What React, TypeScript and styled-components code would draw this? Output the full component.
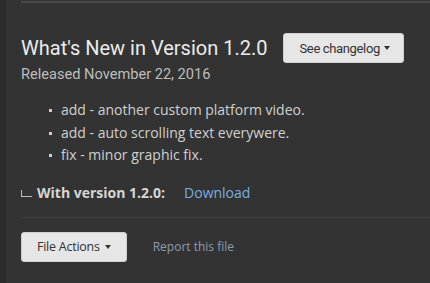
import React from "react";
import styled, { createGlobalStyle } from "styled-components";

const Global = createGlobalStyle`
  html, body { margin: 0; padding: 0; background: #333333; }
  body { width: 430px; height: 283px; overflow: hidden; }
`;

const Page = styled.div`
  display: flex;
  height: 283px;
  background: #333333;
`;

const SideStrip = styled.div`
  width: 6px;
  background: #2b2b2b;
  flex-shrink: 0;
`;

const Main = styled.div`
  flex: 1;
  padding-left: 15px;
  display: flex;
  flex-direction: column;
`;

const TopRule = styled.div`
  height: 2px;
  margin-top: 1px;
  background: #474747;
`;

const Header = styled.div`
  display: flex;
  align-items: center;
  margin-top: 30px;
`;

const Title = styled.h2`
  margin: 0;
  font-family: Roboto, "Liberation Sans", sans-serif;
  font-weight: 400;
  font-size: 20px;
  color: #ececec;
  line-height: 24px;
  white-space: nowrap;
`;

const DropButton = styled.button<{ $font: string }>`
  display: inline-flex;
  align-items: center;
  gap: ${p => (p.$font === "roboto" ? "4px" : "5px")};
  height: 30px;
  padding: ${p => (p.$font === "roboto" ? "0 13px 0 15px" : "0 15px 0 15px")};
  border: 1px solid #d0d0d0;
  border-radius: 3px;
  background: #e6e6e6;
  color: #333;
  white-space: nowrap;
  font-family: ${p => (p.$font === "roboto" ? `Roboto, "Liberation Sans", sans-serif` : `"Open Sans", "Liberation Sans", sans-serif`)};
  font-size: ${p => (p.$font === "roboto" ? "13px" : "12.5px")};
  letter-spacing: ${p => (p.$font === "roboto" ? "-0.35px" : "-0.25px")};
  cursor: pointer;
`;

const HeaderButton = styled(DropButton)`
  margin-left: 16px;
`;

const Caret = styled.span`
  width: 0;
  height: 0;
  border-left: 3.5px solid transparent;
  border-right: 3.5px solid transparent;
  border-top: 4px solid #333;
`;

const Released = styled.div`
  margin-top: 1px;
  font-family: Roboto, "Liberation Sans", sans-serif;
  font-size: 14.6px;
  color: #bdbdbd;
  line-height: 20px;
`;

const Notes = styled.ul`
  margin: 15px 0 0 0;
  padding-left: 40px;
  list-style: none;
  font-family: "Open Sans", "Liberation Sans", sans-serif;
  font-size: 14px;
  line-height: 22.5px;
  color: #d0d0d0;
`;

const Note = styled.li`
  position: relative;
  &::before {
    content: "";
    position: absolute;
    left: -12px;
    top: 10px;
    width: 3px;
    height: 3px;
    background: #cfcfcf;
  }
`;

const VersionRow = styled.div`
  display: flex;
  align-items: center;
  margin-top: 16px;
  font-family: "Open Sans", "Liberation Sans", sans-serif;
  font-size: 14px;
  line-height: 20px;
`;

const Corner = styled.span`
  width: 10px;
  height: 6px;
  border-left: 1px solid #bbb;
  border-bottom: 1px solid #bbb;
  margin: 2px 5px 0 0;
`;

const VersionLabel = styled.span`
  font-weight: 700;
  color: #d6d6d6;
`;

const Link = styled.a`
  margin-left: 19px;
  color: #79aee0;
  text-decoration: none;
`;

const Divider = styled.div`
  height: 1px;
  margin-top: 14px;
  background: #3c3c3c;
`;

const Footer = styled.div`
  display: flex;
  align-items: center;
  margin-top: 14px;
`;

const ReportLink = styled.a`
  margin-left: 26px;
  font-family: "Open Sans", "Liberation Sans", sans-serif;
  font-size: 12px;
  color: #8c9caa;
  text-decoration: none;
`;

export default function App() {
  return (
    <>
      <Global />
      <Page>
        <SideStrip />
        <Main>
          <TopRule />
          <Header>
            <Title>What's New in Version 1.2.0</Title>
            <HeaderButton $font="roboto">
              See changelog
              <Caret />
            </HeaderButton>
          </Header>
          <Released>Released November 22, 2016</Released>
          <Notes>
            <Note>add - another custom platform video.</Note>
            <Note>add - auto scrolling text everywere.</Note>
            <Note>fix - minor graphic fix.</Note>
          </Notes>
          <VersionRow>
            <Corner />
            <VersionLabel>With version 1.2.0:</VersionLabel>
            <Link href="#">Download</Link>
          </VersionRow>
          <Divider />
          <Footer>
            <DropButton $font="open">
              File Actions
              <Caret />
            </DropButton>
            <ReportLink href="#">Report this file</ReportLink>
          </Footer>
        </Main>
      </Page>
    </>
  );
}
